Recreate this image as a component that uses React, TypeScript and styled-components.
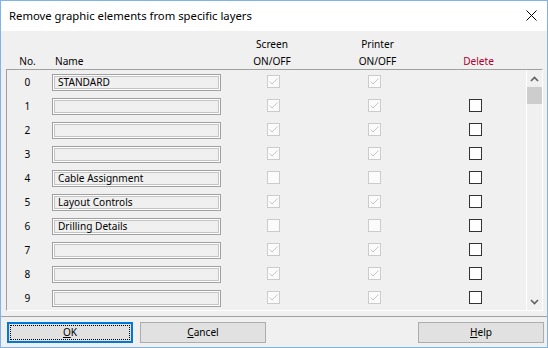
import React from 'react'
import styled, { createGlobalStyle } from 'styled-components'

const GlobalStyle = createGlobalStyle`
  html, body {
    margin: 0;
    padding: 0;
    background: #ffffff;
  }
  body {
    font-family: 'Noto Sans', 'DejaVu Sans', sans-serif;
    font-size: 10.1px;
  }
`

interface Layer {
  no: number
  name: string
  screen: boolean
  printer: boolean
  deletable: boolean
}

const layers: Layer[] = [
  { no: 0, name: 'STANDARD', screen: true, printer: true, deletable: false },
  { no: 1, name: '', screen: true, printer: true, deletable: true },
  { no: 2, name: '', screen: true, printer: true, deletable: true },
  { no: 3, name: '', screen: true, printer: true, deletable: true },
  { no: 4, name: 'Cable Assignment', screen: false, printer: false, deletable: true },
  { no: 5, name: 'Layout Controls', screen: true, printer: true, deletable: true },
  { no: 6, name: 'Drilling Details', screen: false, printer: false, deletable: true },
  { no: 7, name: '', screen: true, printer: true, deletable: true },
  { no: 8, name: '', screen: true, printer: true, deletable: true },
  { no: 9, name: '', screen: true, printer: true, deletable: true },
]

const CheckMark = () => (
  <svg width="11" height="11" viewBox="0 0 11 11">
    <polyline points="1.5,5.5 4,8 9.5,2.5" fill="none" stroke="#c4c4c4" strokeWidth="1" />
  </svg>
)

const Chevron = ({ up }: { up?: boolean }) => (
  <svg width="9" height="6" viewBox="0 0 9 6">
    <polyline
      points={up ? '1,5 4.5,1.5 8,5' : '1,1 4.5,4.5 8,1'}
      fill="none"
      stroke="#606060"
      strokeWidth="1.6"
    />
  </svg>
)

const App = (): JSX.Element => {
  return (
    <>
      <GlobalStyle />
      <Window>
        <TitleBar>
          <Title>Remove graphic elements from specific layers</Title>
          <Close>
            <svg width="11" height="11" viewBox="0 0 11 11">
              <path d="M0.5 0.5 L10.5 10.5 M10.5 0.5 L0.5 10.5" stroke="#000" strokeWidth="1" />
            </svg>
          </Close>
        </TitleBar>
        <Body>
          <Header>
            <HeadCell>No.</HeadCell>
            <HeadCell $left>Name</HeadCell>
            <HeadStack>
              <span>Screen</span>
              <span>ON/OFF</span>
            </HeadStack>
            <HeadStack>
              <span>Printer</span>
              <span>ON/OFF</span>
            </HeadStack>
            <HeadStack $red>
              <span>Delete</span>
            </HeadStack>
          </Header>
          <Frame>
            <RowList>
              {layers.map((layer) => (
                <Row key={layer.no}>
                  <No>{layer.no}</No>
                  <NameBox>{layer.name}</NameBox>
                  <Check $col={5}>{layer.screen && <CheckMark />}</Check>
                  <Check $col={7}>{layer.printer && <CheckMark />}</Check>
                  {layer.deletable && <Check $col={9} $active />}
                </Row>
              ))}
            </RowList>
            <ScrollBar>
              <Arrow>
                <Chevron up />
              </Arrow>
              <Thumb />
              <Track />
              <Arrow>
                <Chevron />
              </Arrow>
            </ScrollBar>
          </Frame>
          <Separator />
          <Buttons>
            <Button $focused>
              <u>O</u>K
            </Button>
            <Button>
              <u>C</u>ancel
            </Button>
            <Spacer />
            <Button>
              <u>H</u>elp
            </Button>
          </Buttons>
        </Body>
      </Window>
    </>
  )
}

const Window = styled.div`
  width: 548px;
  height: 348px;
  box-sizing: border-box;
  border: 1px solid #7eb4ea;
  background: #f0f0f0;
  display: flex;
  flex-direction: column;
  color: #000;
`

const TitleBar = styled.div`
  height: 30px;
  background: #ffffff;
  display: flex;
  align-items: center;
  padding-left: 8px;
  padding-right: 10px;
`

const Title = styled.div`
  flex: 1;
  font-size: 11.3px;
  margin-top: -1px;
`

const Close = styled.div`
  display: flex;
  align-items: center;
  margin-top: -1px;
`

const Body = styled.div`
  flex: 1;
  display: flex;
  flex-direction: column;
`

const Header = styled.div`
  height: 38px;
  display: grid;
  grid-template-columns: 41px 169px 110px 101px 101px;
  padding-left: 6px;
  align-items: end;
  box-sizing: border-box;
`

const HeadCell = styled.div<{ $left?: boolean }>`
  text-align: ${(props) => (props.$left ? 'left' : 'center')};
  padding-left: ${(props) => (props.$left ? '7px' : '0')};
  line-height: 17px;
  margin-bottom: -1px;
`

const HeadStack = styled.div<{ $red?: boolean }>`
  display: flex;
  flex-direction: column;
  align-items: center;
  line-height: 17px;
  margin-bottom: -1px;
  color: ${(props) => (props.$red ? '#a8002e' : '#000')};
`

const Frame = styled.div`
  margin: 0 4px 0 5px;
  height: 242px;
  box-sizing: border-box;
  border-top: 1px solid #a0a0a0;
  border-left: 1px solid #a0a0a0;
  border-right: 1px solid #ffffff;
  border-bottom: 1px solid #ffffff;
  display: flex;
  overflow: hidden;
`

const RowList = styled.div`
  flex: 1;
  display: flex;
  flex-direction: column;
`

const Row = styled.div`
  height: 24px;
  flex: none;
  display: grid;
  grid-template-columns: 41px 4px 169px 46px 13px 88px 13px 88px 13px;
  align-items: start;
`

const No = styled.div`
  grid-column: 1;
  text-align: center;
  line-height: 24px;
`

const NameBox = styled.div`
  grid-column: 3;
  margin-top: 4px;
  height: 17px;
  box-sizing: border-box;
  border: 1px solid #a0a0a0;
  box-shadow: inset 0 0 0 1px #ffffff, inset 0 0 0 2px #c4c4c4;
  padding-left: 5px;
  line-height: 15px;
  white-space: nowrap;
  overflow: hidden;
`

const Check = styled.div<{ $col: number; $active?: boolean }>`
  grid-column: ${(props) => props.$col};
  margin-top: 5px;
  width: 13px;
  height: 13px;
  box-sizing: border-box;
  border: 1px solid ${(props) => (props.$active ? '#333333' : '#cccccc')};
  background: ${(props) => (props.$active ? '#ffffff' : '#fbfbfb')};
  display: flex;
  align-items: center;
  justify-content: center;
`

const ScrollBar = styled.div`
  width: 15px;
  flex: none;
  border-left: 1px solid #ffffff;
  display: flex;
  flex-direction: column;
  background: #f0f0f0;
`

const Arrow = styled.div`
  height: 17px;
  display: flex;
  align-items: center;
  justify-content: center;
`

const Thumb = styled.div`
  height: 17px;
  background: #cdcdcd;
`

const Track = styled.div`
  flex: 1;
`

const Separator = styled.div`
  margin-top: 5px;
  height: 1px;
  background: #a0a0a0;
`

const Buttons = styled.div`
  display: flex;
  padding: 5px 3px 0 6px;
  gap: 7px;
`

const Spacer = styled.div`
  flex: 1;
`

const Button = styled.div<{ $focused?: boolean }>`
  width: 126px;
  height: 21px;
  box-sizing: border-box;
  background: #e1e1e1;
  border: ${(props) => (props.$focused ? '2px solid #0078d7' : '1px solid #adadad')};
  outline: ${(props) => (props.$focused ? '1px dotted #000' : 'none')};
  outline-offset: -4px;
  display: flex;
  align-items: center;
  justify-content: center;
  line-height: 17px;

  u {
    text-decoration-thickness: 1px;
    text-underline-offset: 1px;
  }
`

export default App
